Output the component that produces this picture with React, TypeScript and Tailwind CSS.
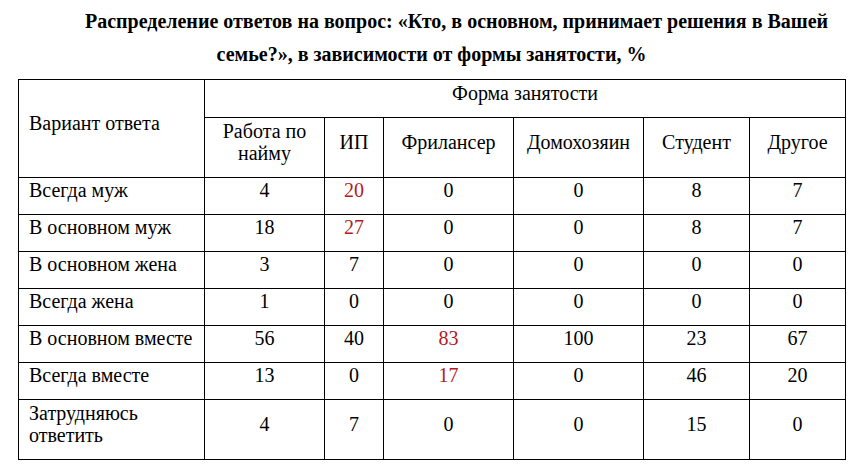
const columns = ["Фрилансер", "Домохозяин", "Студент", "Другое"];

type Row = {
  label: string;
  values: number[];
  red?: number[];
  tall?: boolean;
};

const rows: Row[] = [
  { label: "Всегда муж", values: [4, 20, 0, 0, 8, 7], red: [1] },
  { label: "В основном муж", values: [18, 27, 0, 0, 8, 7], red: [1] },
  { label: "В основном жена", values: [3, 7, 0, 0, 0, 0] },
  { label: "Всегда жена", values: [1, 0, 0, 0, 0, 0] },
  { label: "В основном вместе", values: [56, 40, 83, 100, 23, 67], red: [2] },
  { label: "Всегда вместе", values: [13, 0, 17, 0, 46, 20], red: [2] },
  { label: "Затрудняюсь ответить", values: [4, 7, 0, 0, 15, 0], tall: true },
];

const cell = "border border-black align-middle pb-[12px] pt-0";

export default function App() {
  return (
    <div className="min-h-[476px] w-[863px] bg-white font-['Liberation_Serif',serif] text-[20px] leading-[22px] text-black">
      <h1 className="px-[18px] pt-[5px] text-center indent-[50px] text-[20px] font-bold leading-[33px]">
        Распределение ответов на вопрос: «Кто, в основном, принимает решения в Вашей семье?», в зависимости от формы занятости, %
      </h1>

      <div className="mt-[8px] pl-[18px]">
        <table className="w-[827px] table-fixed border-collapse">
          <colgroup>
            <col className="w-[186px]" />
            <col className="w-[120px]" />
            <col className="w-[59px]" />
            <col className="w-[130px]" />
            <col className="w-[130px]" />
            <col className="w-[106px]" />
            <col className="w-[96px]" />
          </colgroup>
          <thead>
            <tr className="h-[38px]">
              <th rowSpan={2} className={`${cell} pl-[10px] text-left font-normal`}>
                Вариант ответа
              </th>
              <th colSpan={6} className={`${cell} text-center font-normal`}>
                Форма занятости
              </th>
            </tr>
            <tr className="h-[60px]">
              <th className={`${cell} text-center font-normal`}>
                Работа по
                <br />
                найму
              </th>
              <th className={`${cell} text-center font-normal`}>ИП</th>
              {columns.map((c) => (
                <th key={c} className={`${cell} text-center font-normal`}>
                  {c}
                </th>
              ))}
            </tr>
          </thead>
          <tbody>
            {rows.map((row) => (
              <tr key={row.label} className={row.tall ? "h-[60px]" : "h-[37px]"}>
                <td className={`${cell} pl-[10px] text-left`}>
                  {row.tall ? (
                    <>
                      Затрудняюсь
                      <br />
                      ответить
                    </>
                  ) : (
                    row.label
                  )}
                </td>
                {row.values.map((v, i) => (
                  <td
                    key={i}
                    className={`${cell} text-center ${
                      row.red?.includes(i) ? "text-[#b31b1b]" : ""
                    }`}
                  >
                    {v}
                  </td>
                ))}
              </tr>
            ))}
          </tbody>
        </table>
      </div>
    </div>
  );
}
